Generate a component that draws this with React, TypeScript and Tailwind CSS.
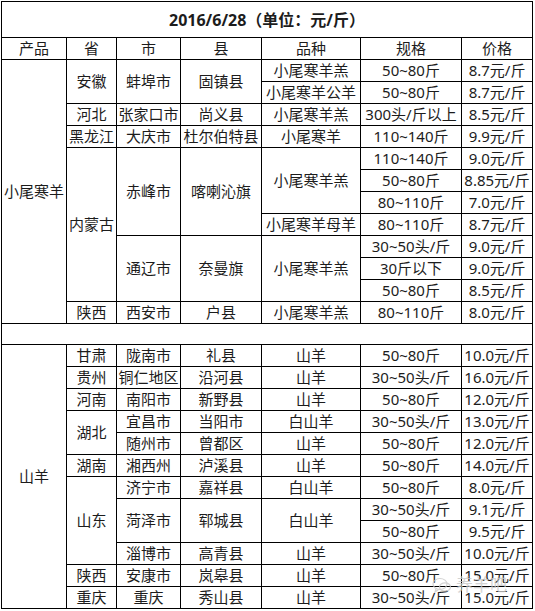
type Cell = { t: string; rs?: number; cs?: number };

const c = (t: string, rs?: number, cs?: number): Cell => ({ t, rs, cs });

// rows of the table body, already cut for rowspans
const rows: Cell[][] = [
  [c("小尾寒羊", 12), c("安徽", 2), c("蚌埠市", 2), c("固镇县", 2), c("小尾寒羊羔"), c("50~80斤"), c("8.7元/斤")],
  [c("小尾寒羊公羊"), c("50~80斤"), c("8.7元/斤")],
  [c("河北"), c("张家口市"), c("尚义县"), c("小尾寒羊羔"), c("300头/斤以上"), c("8.5元/斤")],
  [c("黑龙江"), c("大庆市"), c("杜尔伯特县"), c("小尾寒羊"), c("110~140斤"), c("9.9元/斤")],
  [c("内蒙古", 7), c("赤峰市", 4), c("喀喇沁旗", 4), c("小尾寒羊羔", 3), c("110~140斤"), c("9.0元/斤")],
  [c("50~80斤"), c("8.85元/斤")],
  [c("80~110斤"), c("7.0元/斤")],
  [c("小尾寒羊母羊"), c("80~110斤"), c("8.7元/斤")],
  [c("通辽市", 3), c("奈曼旗", 3), c("小尾寒羊羔", 3), c("30~50头/斤"), c("9.0元/斤")],
  [c("30斤以下"), c("9.0元/斤")],
  [c("50~80斤"), c("8.5元/斤")],
  [c("陕西"), c("西安市"), c("户县"), c("小尾寒羊羔"), c("80~110斤"), c("8.0元/斤")],
  [c("", 1, 7)],
  [c("山羊", 12), c("甘肃"), c("陇南市"), c("礼县"), c("山羊"), c("50~80斤"), c("10.0元/斤")],
  [c("贵州"), c("铜仁地区"), c("沿河县"), c("山羊"), c("30~50头/斤"), c("16.0元/斤")],
  [c("河南"), c("南阳市"), c("新野县"), c("山羊"), c("50~80斤"), c("12.0元/斤")],
  [c("湖北", 2), c("宜昌市"), c("当阳市"), c("白山羊"), c("30~50头/斤"), c("13.0元/斤")],
  [c("随州市"), c("曾都区"), c("山羊"), c("50~80斤"), c("12.0元/斤")],
  [c("湖南"), c("湘西州"), c("泸溪县"), c("山羊"), c("50~80斤"), c("14.0元/斤")],
  [c("山东", 4), c("济宁市"), c("嘉祥县"), c("白山羊"), c("50~80斤"), c("8.0元/斤")],
  [c("菏泽市", 2), c("郓城县", 2), c("白山羊", 2), c("30~50头/斤"), c("9.1元/斤")],
  [c("50~80斤"), c("9.5元/斤")],
  [c("淄博市"), c("高青县"), c("山羊"), c("30~50头/斤"), c("10.0元/斤")],
  [c("陕西"), c("安康市"), c("岚皋县"), c("山羊"), c("50~80斤"), c("15.0元/斤")],
  [c("重庆"), c("重庆"), c("秀山县"), c("山羊"), c("30~50头/斤"), c("15.0元/斤")],
];

const head = ["产品", "省", "市", "县", "品种", "规格", "价格"];
const widths = ["w-[65px]", "w-[50px]", "w-[64px]", "w-[81px]", "w-[99px]", "w-[101px]", "w-[71px]"];

export default function App() {
  return (
    <div className="relative w-[535px] h-[611px] bg-white pt-px pl-px font-['Noto_Sans','Noto_Sans_CJK_SC',sans-serif] text-[15px] text-[#1c1c1c]">
      <table className="w-[531px] table-fixed border-collapse">
        <colgroup>
          {widths.map((w, i) => (
            <col key={i} className={w} />
          ))}
        </colgroup>
        <tbody>
          <tr className="h-[36px]">
            <td colSpan={7} className="border border-black text-center text-[16px] font-bold leading-none p-0">
              2016/6/28（单位：元/斤）
            </td>
          </tr>
          <tr className="h-[22px]">
            {head.map((h) => (
              <td key={h} className="border border-black text-center leading-none p-0">
                {h}
              </td>
            ))}
          </tr>
          {rows.map((r, i) => (
            <tr key={i} className={i === 12 ? "h-[21px]" : "h-[22px]"}>
              {r.map((cell, j) => (
                <td
                  key={j}
                  rowSpan={cell.rs}
                  colSpan={cell.cs}
                  className="border border-black text-center leading-none p-0 whitespace-nowrap"
                >
                  {cell.t}
                </td>
              ))}
            </tr>
          ))}
        </tbody>
      </table>

      {/* faded watermark */}
      <div className="absolute left-[432px] top-[576px] flex items-center gap-1 text-[#c9c9c9] opacity-80 pointer-events-none">
        <svg width="20" height="16" viewBox="0 0 20 16" fill="none" stroke="#c9c9c9" strokeWidth="1.2">
          <ellipse cx="8" cy="7" rx="7" ry="5.5" />
          <ellipse cx="13" cy="10" rx="5.5" ry="4.2" />
          <path d="M4 12 L3 15 L6.5 12.5" />
        </svg>
        <span className="text-[17px] leading-none">养羊吧</span>
      </div>
    </div>
  );
}
